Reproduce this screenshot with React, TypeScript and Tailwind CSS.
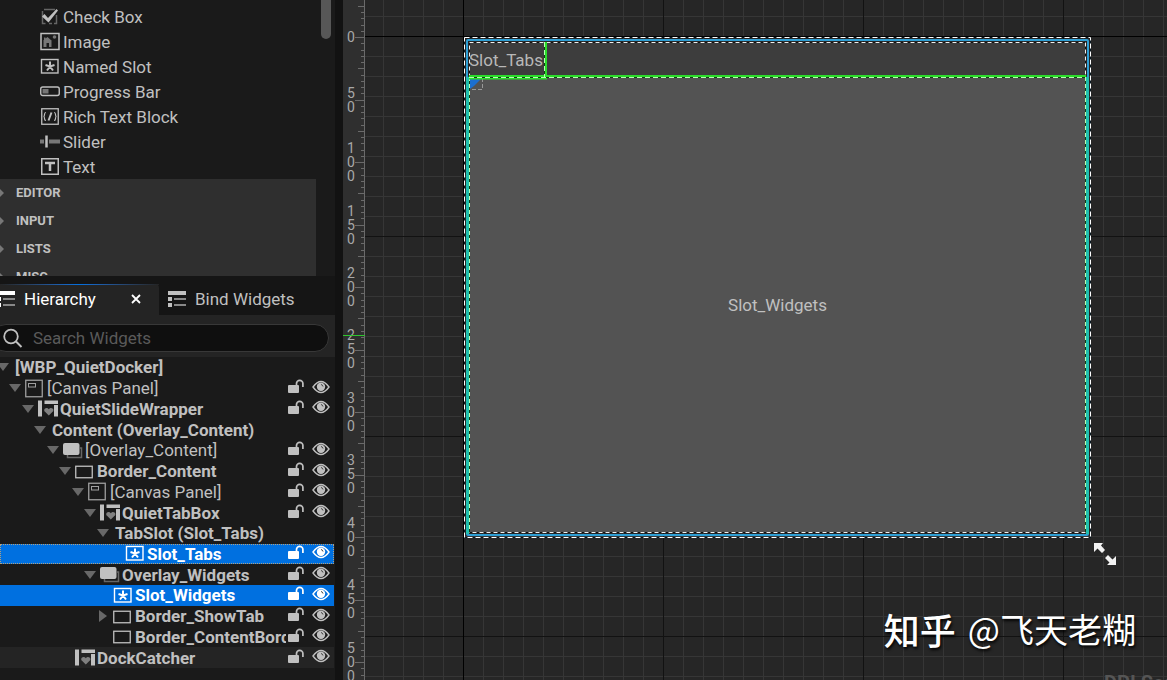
import type { ReactNode } from "react";

type IconName =
  | "check"
  | "image"
  | "slot"
  | "progress"
  | "rich"
  | "slider"
  | "text"
  | "canvas"
  | "user"
  | "overlay"
  | "border";

const iconShapes: Record<IconName, ReactNode> = {
  check: (
    <>
      <path d="M4 2.5h11M2.5 4v12.500h3M9 16.500h3M14 16.500h2.500V8" fill="none" stroke="#666" strokeWidth="1.500" />
      <path d="M2 9.500 4.500 7l3.500 4L16.500 2l1.500 1.500L8.500 15.500z" fill="currentColor" />
    </>
  ),
  image: (
    <>
      <rect x="1" y="1.500" width="18" height="16" fill="none" stroke="currentColor" strokeWidth="1.500" />
      <path d="M3.500 15V9H3l1-1V5.500h1.500v1L7.500 5 12 9h-.5v6H9v-4H6.500v4z" fill="#777" />
      <circle cx="14.500" cy="5" r="1.800" fill="#777" />
    </>
  ),
  slot: (
    <>
      <rect x="1.500" y="2.500" width="16.500" height="13.500" fill="none" stroke="currentColor" strokeWidth="1.400" />
      <path d="M10 4.500v5M5.500 8 10 9.500 14.500 8M10 9.500l-3 4M10 9.500l3 4" fill="none" stroke="currentColor" strokeWidth="2" />
    </>
  ),
  progress: (
    <>
      <rect x="0.750" y="5" width="18.500" height="8.500" rx="2" fill="none" stroke="currentColor" strokeWidth="1.400" />
      <rect x="2.500" y="7" width="6" height="4.500" fill="#777" />
    </>
  ),
  rich: (
    <>
      <rect x="1.750" y="1.750" width="16.500" height="15.500" fill="none" stroke="currentColor" strokeWidth="1.300" />
      <path d="M6 5.500Q4.500 5.500 4.500 7.500T3.500 9.500Q4.500 9.500 4.500 11.500T6 13.500M14 5.500Q15.500 5.500 15.500 7.500T16.500 9.500Q15.500 9.500 15.500 11.500T14 13.500" fill="none" stroke="currentColor" strokeWidth="1.200" />
      <path d="M11.500 5.500 8.500 13.500" stroke="currentColor" strokeWidth="2" />
    </>
  ),
  slider: (
    <>
      <path d="M0 9.500h20" stroke="#777" strokeWidth="4" />
      <path d="M4 6v7h5V6z" fill="#1a1a1a" />
      <path d="M6.500 3.500v12" stroke="currentColor" strokeWidth="2.500" />
    </>
  ),
  text: (
    <>
      <rect x="1.750" y="1.750" width="16.500" height="15.500" fill="none" stroke="currentColor" strokeWidth="1.500" />
      <path d="M5 6h10M10 5v9" stroke="currentColor" strokeWidth="2.500" />
    </>
  ),
  canvas: (
    <>
      <rect x="0.750" y="1.250" width="16.500" height="16.500" fill="none" stroke="currentColor" strokeWidth="1.300" opacity=".8" />
      <rect x="3.500" y="4.500" width="7" height="3.500" fill="none" stroke="currentColor" strokeWidth="1" opacity=".8" />
    </>
  ),
  user: (
    <>
      <path d="M0 1.500h4v16H0zM6.500 1.500H20V5H6.500zM16 6h4v11.500h-4z" fill="currentColor" />
      <path d="M10.800 16.500 7 12.800a2 2 0 0 1 0-3.200 2.400 2.400 0 0 1 3.800.7 2.400 2.400 0 0 1 3.800-.7 2 2 0 0 1 0 3.200z" fill="#808080" />
    </>
  ),
  overlay: (
    <>
      <path d="M4.500 14v2.500h14V7H17" fill="none" stroke="#666" strokeWidth="1.500" />
      <rect x="0" y="2" width="16.500" height="12" rx="2" fill="currentColor" />
    </>
  ),
  border: <rect x="0.750" y="4.250" width="16.500" height="11.500" fill="none" stroke="currentColor" strokeWidth="1.300" />,
};

function Icon({ name }: { name: IconName }) {
  return (
    <svg viewBox="0 0 20 19" className="h-[19px] w-5 shrink-0" aria-hidden="true">
      {iconShapes[name]}
    </svg>
  );
}

const paletteItems: { icon: IconName; label: string }[] = [
  { icon: "check", label: "Check Box" },
  { icon: "image", label: "Image" },
  { icon: "slot", label: "Named Slot" },
  { icon: "progress", label: "Progress Bar" },
  { icon: "rich", label: "Rich Text Block" },
  { icon: "slider", label: "Slider" },
  { icon: "text", label: "Text" },
];

const categories = ["EDITOR", "INPUT", "LISTS", "MISC"];

interface TreeNode {
  label: string;
  depth: number;
  icon?: IconName;
  arrow?: "open" | "closed";
  light?: boolean;
  selected?: boolean;
  focused?: boolean;
  hovered?: boolean;
}

const tree: TreeNode[] = [
  { label: "[WBP_QuietDocker]", depth: 0, arrow: "open" },
  { label: "[Canvas Panel]", depth: 1, icon: "canvas", arrow: "open", light: true },
  { label: "QuietSlideWrapper", depth: 2, icon: "user", arrow: "open" },
  { label: "Content (Overlay_Content)", depth: 3, arrow: "open" },
  { label: "[Overlay_Content]", depth: 4, icon: "overlay", arrow: "open", light: true },
  { label: "Border_Content", depth: 5, icon: "border", arrow: "open" },
  { label: "[Canvas Panel]", depth: 6, icon: "canvas", arrow: "open", light: true },
  { label: "QuietTabBox", depth: 7, icon: "user", arrow: "open" },
  { label: "TabSlot (Slot_Tabs)", depth: 8, arrow: "open" },
  { label: "Slot_Tabs", depth: 9, icon: "slot", selected: true, focused: true },
  { label: "Overlay_Widgets", depth: 7, icon: "overlay", arrow: "open" },
  { label: "Slot_Widgets", depth: 8, icon: "slot", selected: true },
  { label: "Border_ShowTab", depth: 8, icon: "border", arrow: "closed" },
  { label: "Border_ContentBorder", depth: 8, icon: "border" },
  { label: "DockCatcher", depth: 5, icon: "user", hovered: true },
];

function LockIcon() {
  return (
    <svg viewBox="0 0 17 15" className="h-[15px] w-[17px]" aria-hidden="true">
      <rect x="0" y="6" width="11" height="8" rx="1" fill="currentColor" />
      <path d="M8.500 7V4.500a3.200 3.200 0 0 1 6.400 0V8" fill="none" stroke="currentColor" strokeWidth="1.700" />
    </svg>
  );
}

function EyeIcon() {
  return (
    <svg viewBox="0 0 18 14" className="h-[14px] w-[18px]" aria-hidden="true">
      <path d="M1 7Q5 1.500 9 1.500T17 7Q13 12.500 9 12.500T1 7z" fill="none" stroke="currentColor" strokeWidth="1.400" />
      <circle cx="9" cy="6.800" r="4.200" fill="currentColor" />
      <path d="M9 4.500a2.500 2.500 0 0 1 2 2" fill="none" stroke="#444" strokeWidth="1" />
    </svg>
  );
}

function ListIcon() {
  return (
    <svg viewBox="0 0 18 17" className="h-[17px] w-[18px] shrink-0" aria-hidden="true">
      <path d="M0 0h18v4H0zM0 6h4v4H0zM0 12h4v4H0z" fill="currentColor" />
      <path d="M6 8h12M6 14h12" stroke="#888" strokeWidth="2" />
    </svg>
  );
}

function TreeRow({ node }: { node: TreeNode }) {
  const tone = node.selected ? "bg-[#0070e0] text-white" : node.hovered ? "bg-[#242424]" : "";
  const outline = node.focused ? "outline-1 -outline-offset-1 outline-dotted outline-[#b0a080]" : "";
  return (
    <li className={`flex min-h-0 flex-1 items-center ${tone} ${outline}`}>
      <div
        className="flex min-w-0 flex-1 items-center overflow-hidden"
        style={{ paddingLeft: Math.floor(node.depth * 12.5) }}
      >
        <span className="-ml-1 mr-[3px] flex w-[14px] shrink-0 justify-center text-[#686868]">
          {node.arrow === "open" && (
            <svg viewBox="0 0 12 8" className="h-2 w-3" aria-hidden="true">
              <path d="M0 0h12L6 8z" fill="currentColor" />
            </svg>
          )}
          {node.arrow === "closed" && (
            <svg viewBox="0 0 8 12" className="h-3 w-2" aria-hidden="true">
              <path d="M0 0v12l8-6z" fill="currentColor" />
            </svg>
          )}
        </span>
        {node.icon && <Icon name={node.icon} />}
        <span className={`ml-[2px] whitespace-nowrap leading-5 ${node.light ? "" : "font-bold"}`}>{node.label}</span>
      </div>
      {node.icon && (
        <div className="flex shrink-0 items-center gap-[7px] pb-[3px] pl-[2px] pr-1">
          <button aria-label={`Lock ${node.label}`}>
            <LockIcon />
          </button>
          <button aria-label={`Toggle visibility of ${node.label}`}>
            <EyeIcon />
          </button>
        </div>
      )}
    </li>
  );
}

function Palette() {
  return (
    <section className="relative h-[276px] shrink-0 overflow-hidden bg-[#1a1a1a] pt-1">
      <ul className="pl-10">
        {paletteItems.map((item) => (
          <li key={item.label} className="flex h-[25px] items-center gap-[3px]">
            <Icon name={item.icon} />
            <span>{item.label}</span>
          </li>
        ))}
      </ul>
      <div className="mr-[19px] bg-[#2f2f2f]">
        {categories.map((name) => (
          <button key={name} className="flex h-7 w-full items-center text-[13px] font-bold">
            <svg viewBox="0 0 4 8" className="mr-3 h-2 w-1" aria-hidden="true">
              <path d="M0 0v8l4-4z" fill="#777" />
            </svg>
            {name}
          </button>
        ))}
      </div>
      <div className="absolute right-1 top-0 h-[39px] w-[10px] rounded-b-full bg-[#575757]" />
    </section>
  );
}

function Hierarchy() {
  return (
    <section className="flex min-h-0 flex-1 flex-col bg-[#1a1a1a]">
      <div className="flex h-[39px] shrink-0 bg-[#151515] pt-2" role="tablist">
        <div className="flex w-[159px] flex-col rounded-tr bg-[#242424] text-white">
          <div className="h-px bg-linear-to-r from-[#242424] via-[#0070e0] to-[#242424]" />
          <div className="flex flex-1 items-center pb-[2px]">
            <button role="tab" aria-selected="true" className="-ml-[3px] flex flex-1 items-center gap-[9px]">
              <ListIcon />
              Hierarchy
            </button>
            <button aria-label="Close tab" className="mr-[18px]">
              <svg viewBox="0 0 10 10" className="h-[10px] w-[10px]" aria-hidden="true">
                <path d="M1 1l8 8M9 1l-8 8" stroke="currentColor" strokeWidth="1.800" />
              </svg>
            </button>
          </div>
        </div>
        <button role="tab" aria-selected="false" className="flex items-center gap-[9px] pb-px pl-[9px]">
          <ListIcon />
          Bind Widgets
        </button>
      </div>
      <div className="shrink-0 bg-[#242424] pb-[5px] pr-[6px] pt-[9px]">
        <label className="-ml-2 flex h-7 items-center rounded-full border border-[#383838] bg-[#0f0f0f] pl-[10px]">
          <svg viewBox="0 0 20 20" className="h-5 w-5 shrink-0" aria-hidden="true">
            <circle cx="8" cy="8.500" r="6.800" fill="none" stroke="currentColor" strokeWidth="1.800" />
            <path d="M13 13.500l5.500 5.500" stroke="currentColor" strokeWidth="2" />
          </svg>
          <input
            aria-label="Search Widgets"
            placeholder="Search Widgets"
            className="ml-[10px] min-w-0 flex-1 bg-transparent outline-none placeholder:text-[#5a5a5a]"
          />
        </label>
      </div>
      <ul className="mr-px flex h-[311px] shrink-0 flex-col">
        {tree.map((node, i) => (
          <TreeRow key={i} node={node} />
        ))}
      </ul>
    </section>
  );
}

const rulerMarks = ["0", "50", "100", "150", "200", "250", "300", "350", "400", "450", "500"];
const ticks = Array.from({ length: 110 }, (_, i) => i - 5);

function Ruler() {
  return (
    <div className="relative flex w-[22px] shrink-0 overflow-hidden bg-[#2f2f2f]">
      <div className="mt-[6px] flex h-[687px] w-4 shrink-0 flex-col text-sm leading-[14px] text-[#a8a8a8]">
        {rulerMarks.map((mark) => (
          <div key={mark} className="flex flex-1 items-center justify-center">
            <span className="w-2 text-center break-all">{mark}</span>
          </div>
        ))}
      </div>
      <svg className="absolute inset-y-0 right-0 h-full w-[10px]" stroke="#6a6a6a" aria-hidden="true">
        <path d="M9.500 0v2000" />
        {ticks.map((n) => {
          const y = Math.round(37 + n * 6.25) + 0.5;
          const start = n % 10 === 0 ? 0 : n % 5 === 0 ? 3 : 6;
          return <path key={n} d={`M${start} ${y}H10`} />;
        })}
      </svg>
      <div className="absolute left-0 top-[335px] z-10 h-px w-full bg-[#2fc42f]" />
    </div>
  );
}

function DesignCanvas() {
  return (
    <main className="relative min-w-0 flex-1 overflow-hidden bg-[#262626]">
      <svg className="absolute inset-0 h-full w-full" aria-hidden="true">
        <defs>
          <pattern id="minor" x="-2" y="-4" width="20" height="20" patternUnits="userSpaceOnUse">
            <path d="M0 .5h20M.5 0v20" stroke="#363636" />
          </pattern>
          <pattern id="major" x="98" y="36" width="200" height="200" patternUnits="userSpaceOnUse">
            <path d="M0 .5h200M.5 0v200" stroke="#121212" />
          </pattern>
        </defs>
        <rect width="100%" height="100%" fill="url(#minor)" />
        <rect width="100%" height="100%" fill="url(#major)" />
        <path d="M0 36.500h3000M98.500 0v3000" stroke="#000" />
      </svg>

      <div className="absolute left-[99px] top-[37px] h-[501px] w-[627px]">
        <div className="flex h-full flex-col p-[5px]">
          <div className="flex h-[35px] shrink-0 items-center bg-[#3d3d3d] text-[#b8b8b8]">Slot_Tabs</div>
          <div className="flex flex-1 items-center justify-center bg-[#535353] text-[#c0c0c0]">Slot_Widgets</div>
        </div>
        <svg viewBox="0 0 627 501" className="absolute inset-0 h-full w-full" fill="none" aria-hidden="true">
          <path d="M6 42h11L10 49 6 52z" fill="#1c6fd0" />
          <path d="M8 52.500h10.500V42" stroke="#999" strokeDasharray="4 2" />
          <rect x=".5" y=".5" width="626" height="500" stroke="#0b1a22" />
          <rect x=".5" y=".5" width="626" height="500" stroke="#fff" strokeDasharray="5 3" />
          <rect x="5.500" y="5.500" width="616" height="490" stroke="#111" />
          <rect x="5.500" y="5.500" width="616" height="490" stroke="#eee" strokeDasharray="4 3" />
          <rect x="3" y="3" width="621" height="495" rx="1" stroke="#2f9fd4" strokeWidth="2" />
          <path d="M3.500 40v457M623.500 40v457" stroke="#20bfae" strokeWidth="3" />
          <path d="M5.500 40v455M621.500 40v455" stroke="#123d12" />
          <path d="M5.500 40v455M621.500 40v455" stroke="#b6ffb0" strokeDasharray="4 3" />
          <path d="M5 39h617M82 5v36" stroke="#2bdc2b" strokeWidth="2" />
          <path d="M5 41h78" stroke="#2bdc2b" strokeWidth="3" />
          <path d="M5 40.500h617M80.500 5v35" stroke="#123d12" />
          <path d="M5 40.500h617M80.500 5v35" stroke="#b6ffb0" strokeDasharray="5 3" />
        </svg>
      </div>

      {/* Resize handle of the design surface */}
      <svg viewBox="0 0 22 22" className="absolute left-[729px] top-[543px] h-[22px] w-[22px]" aria-hidden="true">
        <path d="M0 0h9L7 2.500 11 7 8 10 3.500 5.500 0 9z" fill="#f2f2f2" />
        <path d="M22 22h-9l2.500-2.500L11 15l3-3 4.500 4.500L22 13z" fill="#f2f2f2" />
      </svg>

      <div className="absolute bottom-6 right-[31px] flex items-center gap-3 whitespace-nowrap font-['Noto_Sans_CJK_SC',sans-serif] text-[34px] leading-[54px] text-white [text-shadow:1px_2px_3px_#000]">
        <span className="text-4xl font-medium">知乎</span>
        <span>@飞天老糊</span>
      </div>
      <div className="absolute left-[739px] top-full -mt-[9px] whitespace-nowrap text-xl font-bold leading-6 text-[#555]">
        DPI Scale 1.0
      </div>
    </main>
  );
}

export default function App() {
  return (
    <div className="flex h-screen overflow-hidden bg-[#121212] font-[Roboto,sans-serif] text-[17px] leading-6 text-[#c0c0c0]">
      <aside className="flex w-[335px] shrink-0 flex-col">
        <Palette />
        <Hierarchy />
      </aside>
      <div className="ml-2 flex min-w-0 flex-1">
        <Ruler />
        <DesignCanvas />
      </div>
    </div>
  );
}
